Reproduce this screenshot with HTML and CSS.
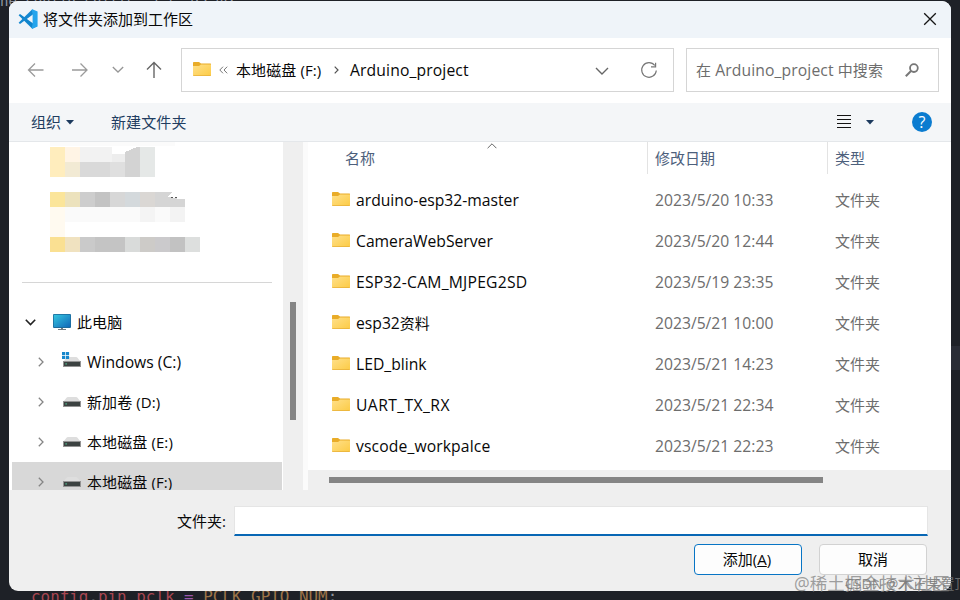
FILE: index.html
```html
<!DOCTYPE html>
<html lang="zh-CN">
  <head>
    <meta charset="UTF-8" />
    <meta name="viewport" content="width=device-width, initial-scale=1.0" />
    <title>将文件夹添加到工作区</title>
    <link rel="stylesheet" href="styles.css">
  </head>
  <body>
    <svg class="defs" width="0" height="0">
      <defs>
        <linearGradient id="folder-fill" x1="0" y1="0" x2="1" y2="1">
          <stop offset="0" stop-color="#ffe08a" />
          <stop offset="1" stop-color="#fccb45" />
        </linearGradient>
        <linearGradient id="screen-fill" x1="0" y1="0" x2="1" y2="1">
          <stop offset="0" stop-color="#35c6e0" />
          <stop offset="1" stop-color="#1268b8" />
        </linearGradient>
      </defs>
      <symbol id="folder" viewBox="0 0 18 14">
        <path d="M0 0.8Q0 0 0.8 0H6L8 1.5H17.5Q18 1.5 18 2V6H0z" fill="#e9ac28" />
        <path d="M0 4H6L8 2.4H18V13.3Q18 14 17.3 14H0.7Q0 14 0 13.3z" fill="url(#folder-fill)" />
        <path d="M0.3 13.6H17.7" stroke="#e6ad38" stroke-width="0.8" />
      </symbol>
      <symbol id="drive" viewBox="0 0 18 10">
        <path d="M0.5 4.5L3.5 0.7Q4 0 5 0H13Q14 0 14.5 0.7L17.5 4.5z" fill="#dedede" />
        <rect y="4" width="18" height="6" fill="#939393" />
        <rect x="1" y="5" width="16" height="4" fill="#3c4241" />
        <rect x="2.5" y="6.3" width="1.2" height="1.2" fill="#54d8a0" />
      </symbol>
      <symbol id="chevron" viewBox="0 0 6 10">
        <path d="M0.8 0.8L5 5L0.8 9.2" fill="none" stroke="#858585" stroke-width="1.3" />
      </symbol>
    </svg>

    <div class="code code-top">ne_config_spiffs, 1_s_array;</div>
    <div class="code code-bottom"><span class="red">config</span>.<span class="red">pin_pclk</span> <span class="op">=</span> <span class="const">PCLK_GPIO_NUM</span>;</div>
    <div class="line-highlight"></div>

    <div class="dialog">
      <div class="titlebar">
        <svg width="20" height="20" viewBox="0 0 20 20">
          <path d="M0.6 6.2L2 5L19 17.2L14.3 19.7z" fill="#0f84cc" />
          <path d="M0.6 13.8L2 15L15.5 5L14.3 0.3z" fill="#1487d0" />
          <path d="M14.3 0.3L19.6 2.6V17.4L14.3 19.7L13.7 19L14.6 15V5L13.7 1z" fill="#24a4ec" />
        </svg>
        <span class="title">将文件夹添加到工作区</span>
        <svg class="close" width="14" height="14" viewBox="0 0 14 14">
          <path d="M1.2 1.2L12.8 12.8M12.8 1.2L1.2 12.8" stroke="#151515" stroke-width="1.3" />
        </svg>
      </div>

      <div class="address-row">
        <div class="history">
          <svg width="18" height="16" viewBox="0 0 18 16"><path d="M16.5 8H1.5M8 1.5L1.5 8L8 14.5" fill="none" stroke="#9b9b9b" stroke-width="1.3" /></svg>
          <svg width="18" height="16" viewBox="0 0 18 16"><path d="M1 8H16M9.5 1.5L16 8L9.5 14.5" fill="none" stroke="#9b9b9b" stroke-width="1.3" /></svg>
          <svg width="12" height="16" viewBox="0 0 12 16"><path d="M0.8 5L6 10L11.2 5" fill="none" stroke="#969696" stroke-width="1.3" /></svg>
          <svg width="16" height="18" viewBox="0 0 16 18"><path d="M8 17V1.5M1 8.5L8 1.5L15 8.5" fill="none" stroke="#666" stroke-width="1.4" /></svg>
        </div>
        <div class="address">
          <svg class="folder-icon" width="18" height="14"><use href="#folder" /></svg>
          <svg class="crumbs" width="9" height="8" viewBox="0 0 9 8"><path d="M4 0.7L0.8 4L4 7.3M8.2 0.7L5 4L8.2 7.3" fill="none" stroke="#777" /></svg>
          <span class="crumb-disk">本地磁盘 (F:)</span>
          <svg class="crumb-arrow" width="5" height="8" viewBox="0 0 5 8"><path d="M0.7 0.7L4 4L0.7 7.3" fill="none" stroke="#555" stroke-width="1.2" /></svg>
          <span class="crumb-dir">Arduino_project</span>
          <svg class="drop" width="14" height="8" viewBox="0 0 14 8"><path d="M1 1L7 7L13 1" fill="none" stroke="#666" stroke-width="1.4" /></svg>
          <svg class="refresh" width="18" height="18" viewBox="0 0 18 18"><path d="M14.8 3.5A7.3 7.3 0 1 0 16.3 8.5M15.6 0.8V4.8H11" fill="none" stroke="#777" stroke-width="1.2" /></svg>
        </div>
        <div class="search">
          <span>在 <span class="latin">Arduino_project</span> 中搜索</span>
          <svg width="14" height="14" viewBox="0 0 14 14"><circle cx="8.9" cy="5.1" r="3.9" fill="none" stroke="#777" stroke-width="1.8" /><path d="M6 8L0.8 13.2" stroke="#777" stroke-width="2" /></svg>
        </div>
      </div>

      <div class="toolbar">
        <span>组织</span>
        <svg class="caret" width="8" height="5" viewBox="0 0 8 5"><path d="M0 0H8L4 4.6z" fill="#1c3a5e" /></svg>
        <span class="new-folder">新建文件夹</span>
        <svg class="view" width="15" height="14" viewBox="0 0 15 14" shape-rendering="crispEdges"><path d="M0 0.5H14M0 4.5H14M0 8.5H14M0 12.5H14" stroke="#141414" /></svg>
        <svg class="view-caret" width="8" height="5" viewBox="0 0 8 5"><path d="M0 0H8L4 4.6z" fill="#1c3a5e" /></svg>
        <div class="help">?</div>
      </div>

      <div class="content">
        <div class="tree">
          <svg class="recent" width="220" height="140" viewBox="0 0 220 140" shape-rendering="crispEdges">
            <path d="M50 0H175V4H50z" fill="#fbfbfb" />
            <path d="M50 5H65V35H50z" fill="#ffedbd" />
            <path d="M65 5H80V20H65z" fill="#fff4e5" /><path d="M65 20H80V35H65z" fill="#f2ead4" />
            <path d="M80 5H112V20H80z" fill="#f2f2f2" /><path d="M112 12H125V20H112z" fill="#ededed" />
            <path d="M80 20H110V35H80z" fill="#d9d9d9" /><path d="M110 20H125V35H110z" fill="#dfdfdf" />
            <path d="M125 10L137 5H140V35H125z" fill="#d3d3d3" /><path d="M140 5H155V35H140z" fill="#e5e8e7" />
            <path d="M50 50H65V65H50z" fill="#fbe59a" /><path d="M65 50H80V65H65z" fill="#ece2bd" />
            <path d="M80 50H95V65H80z" fill="#cdcdcd" /><path d="M95 50H110V65H95z" fill="#c3c3c3" />
            <path d="M110 50H125V65H110z" fill="#d7d7d7" /><path d="M125 50H140V65H125z" fill="#d4d9dc" />
            <path d="M140 50H155V65H140z" fill="#dad7d4" /><path d="M155 50H172L168 55L180 57H185V65H155z" fill="#d5d5d5" />
            <path d="M171 55.5H173M175 55.5H177" stroke="#555" />
            <path d="M50 65H65V95H50z" fill="#fffaf0" /><path d="M65 65H140V80H65z" fill="#fafafa" />
            <path d="M140 65H155V80H140z" fill="#f4f4f4" /><path d="M155 65H170V80H155z" fill="#fafafa" />
            <path d="M170 65H185V80H170z" fill="#f3f3f3" />
            <path d="M50 95H65V110H50z" fill="#fae092" /><path d="M65 95H80V110H65z" fill="#f0e2c0" />
            <path d="M80 95H95V110H80z" fill="#cacaca" /><path d="M95 95H125V110H95z" fill="#c4c4c4" />
            <path d="M125 95H140V110H125z" fill="#d9dbda" /><path d="M140 95H155V110H140z" fill="#cdcbc8" />
            <path d="M155 95H170V110H155z" fill="#cbcacc" /><path d="M170 95H185V110H170z" fill="#c2c2c2" />
            <path d="M185 95H200V110H185z" fill="#dddfde" />
          </svg>
          <div class="separator"></div>
          <div class="node root">
            <svg width="11" height="7" viewBox="0 0 11 7"><path d="M0.8 0.8L5.5 5.5L10.2 0.8" fill="none" stroke="#222" stroke-width="1.6" /></svg>
            <svg class="pc" width="18" height="16" viewBox="0 0 18 16"><rect width="18" height="14" rx="1" fill="#1c6b9c" /><rect x="0.8" y="0.8" width="16.4" height="12.2" fill="url(#screen-fill)" /><path d="M8 14H10V15H13V16H5V15H8z" fill="#747b80" /></svg>
            <span>此电脑</span>
          </div>
          <div class="node">
            <svg width="6" height="10"><use href="#chevron" /></svg>
            <svg class="system-drive" width="19" height="15" viewBox="0 0 19 15"><use href="#drive" x="1" y="5" width="18" height="10" /><path d="M0 0H3.2V3.2H0zM3.9 0H7.1V3.2H3.9zM0 3.9H3.2V7.1H0zM3.9 3.9H7.1V7.1H3.9z" fill="#1787cc" /></svg>
            <span class="latin">Windows (C:)</span>
          </div>
          <div class="node">
            <svg width="6" height="10"><use href="#chevron" /></svg>
            <svg class="drive" width="18" height="10"><use href="#drive" /></svg>
            <span>新加卷 (D:)</span>
          </div>
          <div class="node">
            <svg width="6" height="10"><use href="#chevron" /></svg>
            <svg class="drive" width="18" height="10"><use href="#drive" /></svg>
            <span>本地磁盘 (E:)</span>
          </div>
          <div class="node selected">
            <svg width="6" height="10"><use href="#chevron" /></svg>
            <svg class="drive" width="18" height="10"><use href="#drive" /></svg>
            <span>本地磁盘 (F:)</span>
          </div>
        </div>
        <div class="tree-scroll"><div class="thumb"></div></div>
        <div class="files">
          <div class="list">
            <svg class="sort" width="10" height="6" viewBox="0 0 10 6"><path d="M0.6 5.2L5 0.8L9.4 5.2" fill="none" stroke="#666" /></svg>
            <div class="file-head">
              <span class="name">名称</span><span>修改日期</span><span>类型</span>
            </div>
            <div class="file">
              <span class="name"><svg width="18" height="14"><use href="#folder" /></svg>arduino-esp32-master</span>
              <span class="date">2023/5/20 10:33</span><span class="type">文件夹</span>
            </div>
            <div class="file">
              <span class="name"><svg width="18" height="14"><use href="#folder" /></svg>CameraWebServer</span>
              <span class="date">2023/5/20 12:44</span><span class="type">文件夹</span>
            </div>
            <div class="file">
              <span class="name caps"><svg width="18" height="14"><use href="#folder" /></svg>ESP32-CAM_MJPEG2SD</span>
              <span class="date">2023/5/19 23:35</span><span class="type">文件夹</span>
            </div>
            <div class="file">
              <span class="name"><svg width="18" height="14"><use href="#folder" /></svg>esp32<span class="cjk">资料</span></span>
              <span class="date">2023/5/21 10:00</span><span class="type">文件夹</span>
            </div>
            <div class="file">
              <span class="name"><svg width="18" height="14"><use href="#folder" /></svg>LED_blink</span>
              <span class="date">2023/5/21 14:23</span><span class="type">文件夹</span>
            </div>
            <div class="file">
              <span class="name caps-wide"><svg width="18" height="14"><use href="#folder" /></svg>UART_TX_RX</span>
              <span class="date">2023/5/21 22:34</span><span class="type">文件夹</span>
            </div>
            <div class="file">
              <span class="name"><svg width="18" height="14"><use href="#folder" /></svg><span class="loose">vscode_workpalce</span></span>
              <span class="date">2023/5/21 22:23</span><span class="type">文件夹</span>
            </div>
          </div>
          <div class="list-scroll"><div class="thumb"></div></div>
        </div>
      </div>

      <div class="footer">
        <div class="folder-field">
          <label for="folder-name">文件夹:</label>
          <input id="folder-name" type="text" />
        </div>
        <div class="buttons">
          <button class="primary">添加(<u>A</u>)</button>
          <button>取消</button>
        </div>
      </div>
    </div>

    <div class="watermark">@稀土掘金技术社区</div>
    <div class="watermark small">CSDN @木正某置顶</div>
  </body>
</html>
```
FILE: styles.css
```css
* {
  box-sizing: border-box;
}
body {
  position: relative;
  width: 960px;
  height: 600px;
  margin: 0;
  padding: 1px 9px 0;
  overflow: hidden;
  background-color: #1e2127;
  font-family: "Open Sans", "Noto Sans CJK SC", sans-serif;
  font-size: 15px;
  line-height: 20px;
  color: #080808;
}
svg {
  display: block;
  flex: none;
}
.defs {
  position: absolute;
}
.latin {
  font-size: 15.7px;
}
.cjk {
  font-size: 15px;
}

/* editor behind the dialog */
.code {
  position: absolute;
  font-family: "DejaVu Sans Mono", monospace;
  font-size: 16px;
  white-space: pre;
  color: #9298a3;
}
.code-top {
  left: 0;
  top: -9px;
  font-size: 14px;
}
.code-bottom {
  left: 31px;
  top: 587px;
  font-size: 15.9px;
  color: #8d939e;
}
.red {
  color: #a94752;
}
.op {
  color: #9b58ad;
}
.const {
  color: #9c7448;
}
.line-highlight {
  position: absolute;
  left: 951px;
  top: 346px;
  width: 9px;
  height: 24px;
  background-color: #292c35;
}

.dialog {
  position: relative;
  display: flex;
  flex-direction: column;
  width: 942px;
  height: 590px;
  border-radius: 9px;
  overflow: hidden;
  background-color: #efefef;
}
.titlebar {
  display: flex;
  align-items: center;
  height: 37px;
  padding: 0 14px 2px 9px;
  background-color: #eff4f9;
}
.title {
  margin-left: 5px;
}
.close {
  margin-left: auto;
}

.address-row {
  display: flex;
  height: 65px;
  padding: 10px 12px 0 0;
  background-color: white;
}
.history {
  display: flex;
  align-items: center;
  width: 172px;
  height: 44px;
  padding-left: 18px;
}
.history svg:nth-child(2) {
  margin-left: 26px;
}
.history svg:nth-child(3) {
  margin-left: 23px;
}
.history svg:nth-child(4) {
  margin-left: 22px;
}
.address,
.search {
  display: flex;
  align-items: center;
  height: 44px;
  border: 1px solid #d5d5d5;
}
.address {
  width: 493px;
  padding: 0 15px 0 11px;
}
.folder-icon {
  margin-top: -2px;
}
.crumbs {
  margin-left: 8px;
}
.crumb-disk {
  margin: -1px 0 0 8px;
  width: 87px;
  white-space: nowrap;
  letter-spacing: 0.1px;
}
.crumb-arrow {
  margin-left: 11px;
}
.crumb-dir {
  margin: -1px 0 0 11px;
  font-size: 15.7px;
  letter-spacing: 0.13px;
}
.drop {
  margin: 2px 0 0 auto;
}
.refresh {
  margin: 2px 0 0 31px;
}
.search {
  width: 253px;
  margin-left: 12px;
  padding: 0 19px 0 9px;
  justify-content: space-between;
  letter-spacing: 0.12px;
  color: #6d6d6d;
}

.toolbar {
  display: flex;
  align-items: center;
  height: 39px;
  padding: 0 19px 0 22px;
  border-bottom: 1px solid #e4e7ea;
  background-color: #f4f6f8;
  color: #213d61;
}
.caret {
  margin-left: 5px;
}
.new-folder {
  margin-left: 37px;
  letter-spacing: 0.1px;
}
.view {
  margin-left: auto;
}
.view-caret {
  margin-left: 14px;
}
.help {
  width: 20px;
  height: 20px;
  margin-left: 38px;
  border-radius: 50%;
  background-color: #0b7cd0;
  color: white;
  font-size: 16px;
  text-align: center;
}

.content {
  display: flex;
  height: 348px;
}
.tree {
  width: 274px;
  overflow: hidden;
  background-color: white;
}
.recent {
  margin-left: -9px;
}
.separator {
  width: 250px;
  height: 1px;
  margin: 0 0 19px 13px;
  background-color: #d6d6d6;
}
.node {
  display: flex;
  align-items: center;
  width: 270px;
  height: 40px;
  margin-left: 3px;
  padding-left: 26px;
  white-space: nowrap;
}
.node span {
  margin-left: 6px;
  letter-spacing: 0.1px;
}
.node .latin {
  letter-spacing: 0;
}
.root {
  padding-left: 13px;
}
.root .pc {
  margin-left: 17px;
}
.node .drive {
  margin-left: 19px;
}
.node .system-drive {
  margin: -5px 0 0 18px;
}
.selected {
  background-color: #d8d8d8;
}
.tree-scroll {
  width: 20px;
  padding: 160px 6px 0 7px;
  background-color: #efefef;
}
.tree-scroll .thumb {
  width: 6px;
  height: 118px;
  background-color: #858585;
}
.files {
  flex: 1;
  padding-left: 5px;
  background-color: #fbfbfb;
}
.list {
  position: relative;
  height: 328px;
  background-color: white;
}
.sort {
  position: absolute;
  left: 179px;
  top: 1px;
}
.file-head,
.file {
  display: grid;
  grid-template-columns: 339px 180px 1fr;
}
.file-head {
  height: 37px;
  color: #4d607c;
}
.file-head span {
  height: 32px;
  padding: 6px 0 0 7px;
  border-left: 1px solid #e3e3e3;
}
.file-head .name {
  padding-left: 37px;
  border-left: none;
}
.file {
  height: 41px;
  align-items: center;
}
.file .name {
  display: flex;
  align-items: center;
  padding-left: 24px;
  font-size: 15.7px;
}
.file .name svg {
  margin: -1px 6px 0 0;
}
.caps {
  letter-spacing: 0.22px;
}
.caps-wide {
  letter-spacing: 0.4px;
}
.loose {
  letter-spacing: 0.12px;
}
.date,
.type {
  padding-left: 8px;
  color: #6d6d6d;
}
.date {
  font-size: 15.7px;
}
.list-scroll {
  height: 20px;
  padding: 7px 0 0 21px;
  background-color: #efefef;
}
.list-scroll .thumb {
  width: 494px;
  height: 6px;
  background-color: #858585;
}

.footer {
  padding: 16px 23px 0 0;
}
.folder-field {
  display: flex;
  align-items: center;
  justify-content: flex-end;
}
.folder-field input {
  width: 694px;
  height: 30px;
  margin-left: 8px;
  border: 1px solid #e5e5e5;
  border-bottom: 2px solid #0867b5;
  background-color: white;
}
.buttons {
  display: flex;
  justify-content: flex-end;
  gap: 17px;
  margin: 8px 1px 0 0;
}
.buttons button {
  width: 108px;
  height: 31px;
  padding: 0 0 2px;
  border: 1px solid #d2d2d2;
  border-radius: 4px;
  background-color: #fdfdfd;
  color: #080808;
  font: inherit;
}
.buttons .primary {
  padding-right: 2px;
  border-color: #0875c5;
}

.watermark {
  position: absolute;
  left: 794px;
  top: 573px;
  font-size: 17.5px;
  white-space: nowrap;
  color: rgba(130, 130, 130, 0.75);
}
.watermark.small {
  left: 845px;
  top: 574px;
  font-size: 14px;
  color: rgba(120, 120, 120, 0.85);
}
```
